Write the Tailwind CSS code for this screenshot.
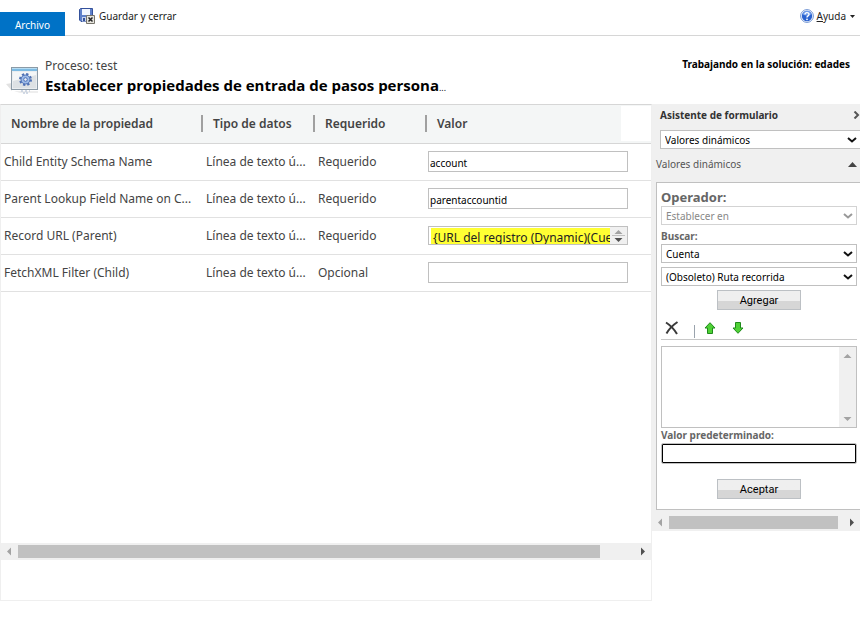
<!DOCTYPE html>
<html lang="es">
<head>
<meta charset="utf-8">
<meta name="viewport" content="width=device-width, initial-scale=1">
<title>Establecer propiedades de entrada de pasos personalizados</title>
<script src="https://cdn.jsdelivr.net/npm/@tailwindcss/browser@4"></script>
</head>
<body class="min-h-screen bg-white font-['Noto_Sans','Open_Sans',sans-serif] text-[10px] text-black">

<header class="flex h-9 items-start justify-between border-b border-[#d6d6d6]">
  <div class="flex items-start">
    <button type="button" class="mt-3 h-6 w-[65px] bg-[#0072c6] pt-[2px] leading-5 text-white">Archivo</button>
    <button type="button" class="ml-[14px] mt-2 flex h-4 items-center gap-1 text-[#222]">
      <svg class="h-4 w-4" viewBox="0 0 16 16" aria-hidden="true">
        <path d="M.5 1.500l1-1h12v13H2L.5 12z" fill="#5f80c9" stroke="#34519b"/>
        <path d="M3 1h8v6H3z" fill="#f2f6ff"/>
        <path d="M3 9h6v4.500H3z" fill="#c9d6ef"/>
        <path d="M4 10h2v3H4z" fill="#34519b"/>
        <path d="M7.500 7.500h8v8h-8z" fill="#e6e4dd" stroke="#77756c"/>
        <path d="M9.500 9.500l4 4M13.500 9.500l-4 4" stroke="#222" stroke-width="1.500"/>
      </svg>
      <span>Guardar y cerrar</span>
    </button>
  </div>
  <button type="button" class="mr-[5px] mt-2 flex h-4 items-center text-[#222]">
    <svg class="mr-[3px] h-[14px] w-[14px]" viewBox="0 0 14 14" aria-hidden="true">
      <circle cx="7" cy="7" r="6.400" fill="#fff" stroke="#6f93d2"/>
      <circle cx="7" cy="7" r="5.200" fill="#2a62cf"/>
      <path d="M2.500 5.500a4.600 4.600 0 0 1 9 0c-3 1.500-6 1.500-9 0z" fill="#6d9bea"/>
      <path d="M5 5.600c0-2.600 4-2.600 4-.2 0 1.500-2 1.500-2 3" fill="none" stroke="#fff" stroke-width="1.400"/>
      <circle cx="7" cy="10.300" r=".9" fill="#fff"/>
    </svg>
    <span><span class="underline">A</span>yuda</span>
    <svg class="ml-1 h-[3px] w-[5px]" viewBox="0 0 5 3" aria-hidden="true"><path d="M0 0h5L2.500 3z" fill="#222"/></svg>
  </button>
</header>

<section class="flex h-[68px] items-start justify-between">
  <div class="flex min-w-0 items-start">
    <svg class="ml-[6px] mt-[30px] h-[30px] w-[34px] shrink-0" viewBox="0 0 34 30" aria-hidden="true">
      <path d="M0 18l6-1v8z" fill="#e2e2e2"/>
      <path d="M8 25h24v2H14z" fill="#eee"/>
      <rect x="5.500" y="1.500" width="26" height="22" fill="#e9edf0" stroke="#8b9aa6"/>
      <path d="M6 2h25v3H6z" fill="#7dbbe3"/>
      <path d="M6 2h25v1H6z" fill="#b5dcf3"/>
      <path d="M7 6h23v16H7z" fill="#f4f6f7"/>
      <path d="M7 15l23-6v13H7z" fill="#dde1e4"/>
      <circle cx="19.500" cy="13.500" r="5.500" fill="none" stroke="#4d70b5" stroke-width="2" stroke-dasharray="2.300 2.020"/>
      <circle cx="19.500" cy="13.500" r="4.500" fill="#9dbbe8" stroke="#4d70b5"/>
      <circle cx="19.500" cy="13.500" r="1.800" fill="#e9eef5" stroke="#4d70b5"/>
      <path d="M15 25h2m2 0h2m2 0h1m-7 2h2m1 0h2" stroke="#c3cede" stroke-width="1.500"/>
    </svg>
    <div class="ml-[5px] mt-5 min-w-0">
      <p class="text-xs leading-5 text-[#444]">Proceso: test</p>
      <h1 class="font-['Open_Sans','Noto_Sans',sans-serif] text-[15px] font-bold leading-[19px] whitespace-nowrap">Establecer propiedades de entrada de pasos persona<span class="text-[9px] font-normal">...</span></h1>
    </div>
  </div>
  <p class="mr-[10px] mt-5 shrink-0 font-bold leading-4">Trabajando en la solución: edades</p>
</section>

<div class="flex items-start">
  <main class="min-w-0 flex-1 border border-[#efefef] border-t-[#d6d6d6]">
    <div class="h-[438px] overflow-hidden">
      <table class="w-full table-fixed border-collapse text-left text-xs text-[#444]">
        <colgroup><col class="w-[200px]"><col class="w-[112px]"><col class="w-[112px]"><col><col class="w-[30px]"></colgroup>
        <thead>
          <tr class="h-[38px] border-b border-[#d6d6d6] bg-[#f4f6f6] leading-[17px]">
            <th class="p-0 font-semibold"><div class="pl-[10px]">Nombre de la propiedad</div></th>
            <th class="p-0 font-semibold"><div class="border-l-2 border-[#a0a0a0] pl-[10px]">Tipo de datos</div></th>
            <th class="p-0 font-semibold"><div class="border-l-2 border-[#a0a0a0] pl-[10px]">Requerido</div></th>
            <th class="p-0 font-semibold"><div class="border-l-2 border-[#a0a0a0] pl-[10px]">Valor</div></th>
            <td class="p-0"><div class="h-[35px] bg-white"></div></td>
          </tr>
        </thead>
        <tbody>
          <tr class="h-[37px] border-b border-[#e1e1e1]">
            <td class="truncate p-0 pl-[3px] pr-1">Child Entity Schema Name</td>
            <td class="p-0 pl-[5px]">Línea de texto ú...</td>
            <td class="p-0 pl-[5px]">Requerido</td>
            <td colspan="2" class="p-0 pl-[3px]"><input aria-label="Child Entity Schema Name" value="account" class="block h-[21px] w-[200px] border border-[#c0c0c0] bg-white px-[1px] pt-[2px] text-[10px] text-black"></td>
          </tr>
          <tr class="h-[37px] border-b border-[#e1e1e1]">
            <td class="whitespace-nowrap p-0 pl-[3px]">Parent Lookup Field Name on C...</td>
            <td class="p-0 pl-[5px]">Línea de texto ú...</td>
            <td class="p-0 pl-[5px]">Requerido</td>
            <td colspan="2" class="p-0 pl-[3px]"><input aria-label="Parent Lookup Field Name" value="parentaccountid" class="block h-[21px] w-[200px] border border-[#c0c0c0] bg-white px-[1px] pt-[2px] text-[10px] text-black"></td>
          </tr>
          <tr class="h-[37px] border-b border-[#e1e1e1]">
            <td class="truncate p-0 pl-[3px] pr-1">Record URL (Parent)</td>
            <td class="p-0 pl-[5px]">Línea de texto ú...</td>
            <td class="p-0 pl-[5px]">Requerido</td>
            <td colspan="2" class="p-0 pl-[3px]">
              <div class="flex h-[19px] w-[200px] border border-[#c0c0c0] pl-[2px] pt-[1px]">
                <div class="min-w-0 flex-1 overflow-hidden whitespace-nowrap bg-[#ffff33] pl-[2px] leading-5 text-[#222]">{URL del registro (Dynamic)(Cuenta)}</div>
                <svg class="-mt-px h-[17px] w-[17px] bg-[#f0f0f0]" viewBox="0 0 17 17" aria-hidden="true">
                  <path d="M8.500 3l4 4h-8z" fill="#a3a3a3"/><path d="M2 8h13v1H2z" fill="#c0c0c0"/><path d="M8.500 15l4-4h-8z" fill="#505050"/>
                </svg>
              </div>
            </td>
          </tr>
          <tr class="h-[37px] border-b border-[#e1e1e1]">
            <td class="truncate p-0 pl-[3px] pr-1">FetchXML Filter (Child)</td>
            <td class="p-0 pl-[5px]">Línea de texto ú...</td>
            <td class="p-0 pl-[5px]">Opcional</td>
            <td colspan="2" class="p-0 pl-[3px]"><input aria-label="FetchXML Filter (Child)" class="block h-[21px] w-[200px] border border-[#c0c0c0] bg-white px-[1px] text-[10px] text-black"></td>
          </tr>
        </tbody>
      </table>
    </div>
    <div class="flex h-[17px] items-center bg-[#f0f0f0]">
      <svg class="h-[17px] w-[17px]" viewBox="0 0 17 17" aria-hidden="true"><path d="M6 8.500l4-4v8z" fill="#a3a3a3"/></svg>
      <div class="mr-[34px] h-[13px] flex-1 bg-[#c1c1c1]"></div>
      <svg class="h-[17px] w-[17px]" viewBox="0 0 17 17" aria-hidden="true"><path d="M11 8.500l-4-4v8z" fill="#505050"/></svg>
    </div>
    <div class="h-10"></div>
  </main>

  <aside class="w-[208px] shrink-0 bg-[#f0f0f0]">
    <div class="flex h-[22px] items-center justify-between pl-2">
      <h2 class="font-bold text-[#333]">Asistente de formulario</h2>
      <svg class="h-2 w-[7px]" viewBox="0 0 7 8" aria-hidden="true"><path d="M1.500 0.500L5 4 1.500 7.500" fill="none" stroke="#555" stroke-width="2"/></svg>
    </div>
    <div class="mt-1 grid pl-2">
      <select aria-label="Asistente" class="col-start-1 row-start-1 h-[19px] appearance-none border border-r-0 border-[#c0c0c0] bg-white pl-1 leading-4 text-black"><option>Valores dinámicos</option></select>
      <svg class="pointer-events-none col-start-1 row-start-1 mr-[3px] h-[6px] w-[10px] self-center justify-self-end" viewBox="0 0 10 6" aria-hidden="true"><path d="M1 1l4 3.500L9 1" fill="none" stroke="#111" stroke-width="2"/></svg>
    </div>
    <div class="mb-1 mt-[3px] flex h-6 items-center justify-between pl-1 pr-[3px] text-[#555]">
      <span>Valores dinámicos</span>
      <svg class="h-[5px] w-[9px]" viewBox="0 0 9 5" aria-hidden="true"><path d="M4.500 0L9 5H0z" fill="#444"/></svg>
    </div>
    <form class="mt-[6px] border border-r-0 border-[#c0c0c0] bg-white pb-[10px] ml-1 pl-1 pr-[3px] pt-[6px]">
      <label for="operador" class="block text-[13px] font-bold leading-[17px] text-[#666]">Operador:</label>
      <div class="grid">
        <select id="operador" disabled class="col-start-1 row-start-1 h-[19px] appearance-none border border-[#d3d3d3] bg-white pl-1 leading-4 text-[#888] opacity-100"><option>Establecer en</option></select>
        <svg class="pointer-events-none col-start-1 row-start-1 mr-1 h-[6px] w-[10px] self-center justify-self-end" viewBox="0 0 10 6" aria-hidden="true"><path d="M1 1l4 3.500L9 1" fill="none" stroke="#999" stroke-width="2"/></svg>
      </div>
      <label for="buscar" class="mt-1 block font-bold leading-[15px] text-[#666]">Buscar:</label>
      <div class="grid">
        <select id="buscar" class="col-start-1 row-start-1 h-[19px] appearance-none border border-[#c0c0c0] bg-white pl-1 leading-4 text-black"><option>Cuenta</option></select>
        <svg class="pointer-events-none col-start-1 row-start-1 mr-1 h-[6px] w-[10px] self-center justify-self-end" viewBox="0 0 10 6" aria-hidden="true"><path d="M1 1l4 3.500L9 1" fill="none" stroke="#111" stroke-width="2"/></svg>
      </div>
      <div class="mt-1 grid">
        <select aria-label="Campo" class="col-start-1 row-start-1 h-[19px] appearance-none border border-[#c0c0c0] bg-white pl-1 leading-4 text-black"><option>(Obsoleto) Ruta recorrida</option></select>
        <svg class="pointer-events-none col-start-1 row-start-1 mr-1 h-[6px] w-[10px] self-center justify-self-end" viewBox="0 0 10 6" aria-hidden="true"><path d="M1 1l4 3.500L9 1" fill="none" stroke="#111" stroke-width="2"/></svg>
      </div>
      <button type="button" class="mx-auto mt-1 block h-5 w-[84px] border border-[#bcc0c4] bg-linear-to-b from-[#efefef] from-55% to-[#d6d6d6] to-55% pt-px font-['Roboto',sans-serif] text-[11px] leading-4">Agregar</button>
      <div class="mt-2 flex h-[22px] items-start border-b border-[#c8c8c8] pl-1">
        <button type="button" aria-label="Quitar" class="mt-[3px]"><svg class="h-[14px] w-[14px]" viewBox="0 0 14 14"><path d="M1 1.500C5 4 9 8 12 13M12.500 1C8 4 4 8 1.500 12.500" fill="none" stroke="#3a3a3a" stroke-width="2"/></svg></button>
        <span class="ml-[15px] mt-[7px] h-[13px] w-px bg-[#9aa3ad]"></span>
        <button type="button" aria-label="Subir" class="ml-[9px] mt-1"><svg class="h-3 w-3" viewBox="0 0 12 12"><path d="M6 .7L11 6H8.500v5.500h-5V6H1z" fill="#4fd136" stroke="#1f8a1b"/></svg></button>
        <button type="button" aria-label="Bajar" class="ml-4 mt-1"><svg class="h-3 w-3" viewBox="0 0 12 12"><path d="M6 11.300L11 6H8.500V.5h-5V6H1z" fill="#4fd136" stroke="#1f8a1b"/></svg></button>
      </div>
      <div class="mt-[6px] flex h-[82px] border border-[#c0c0c0]">
        <textarea aria-label="Valores seleccionados" class="min-w-0 flex-1 resize-none"></textarea>
        <div class="flex w-[17px] flex-col justify-between bg-[#f0f0f0]">
          <svg class="h-[17px] w-[17px]" viewBox="0 0 17 17" aria-hidden="true"><path d="M8.500 7l4 4h-8z" fill="#a3a3a3"/></svg>
          <svg class="h-[17px] w-[17px]" viewBox="0 0 17 17" aria-hidden="true"><path d="M8.500 11l4-4h-8z" fill="#a3a3a3"/></svg>
        </div>
      </div>
      <label for="predeterminado" class="block font-bold leading-[15px] text-[#666]">Valor predeterminado:</label>
      <input id="predeterminado" class="block h-[21px] w-full rounded-xs border border-[#c0c0c0] bg-white px-1 inset-ring inset-ring-black">
      <button type="button" class="mx-auto mt-[15px] block h-5 w-[84px] border border-[#bcc0c4] bg-linear-to-b from-[#efefef] from-55% to-[#d6d6d6] to-55% pt-px font-['Roboto',sans-serif] text-[11px] leading-4">Aceptar</button>
    </form>
    <div class="mt-1 flex h-[17px] items-center">
      <svg class="h-[17px] w-[17px]" viewBox="0 0 17 17" aria-hidden="true"><path d="M6 8.500l4-4v8z" fill="#a3a3a3"/></svg>
      <div class="flex-1"><div class="h-[13px] w-[97%] bg-[#c1c1c1]"></div></div>
      <svg class="h-[17px] w-[17px]" viewBox="0 0 17 17" aria-hidden="true"><path d="M11 8.500l-4-4v8z" fill="#505050"/></svg>
    </div>
  </aside>
</div>
</body>
</html>
